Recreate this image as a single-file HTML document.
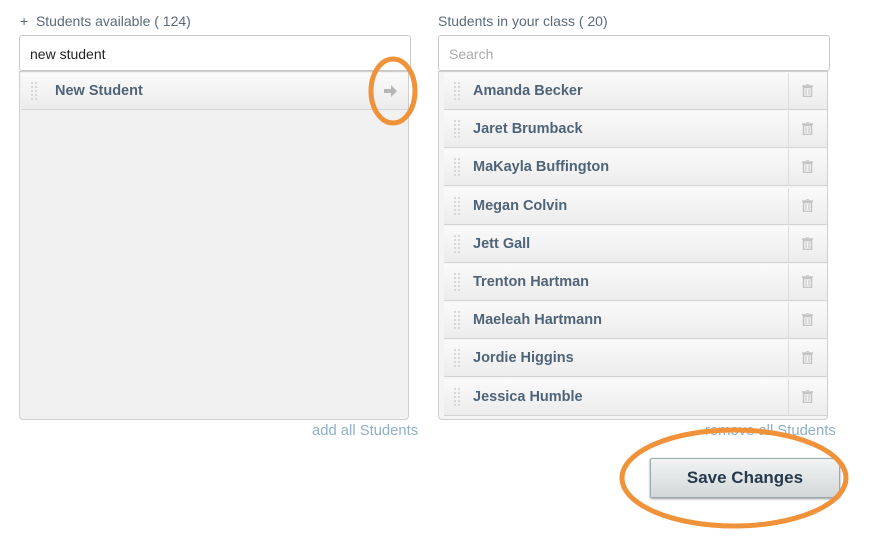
<!DOCTYPE html>
<html><head><style>
body{margin:0;width:877px;height:538px;background:#fff;font-family:"Liberation Sans",sans-serif;position:relative;overflow:hidden}
.a{position:absolute}
.lbl{font-size:14px;color:#5a6a7a}
.inp{border:1px solid #c8c8c8;border-radius:3px;background:#fff;height:36px;box-sizing:border-box;font-size:14px;padding:10px}
.box{border:1px solid #cfcfcf;border-radius:0 0 4px 4px;background:#f1f1f1;box-sizing:border-box}
.row{position:absolute;height:37px;box-sizing:border-box;border-bottom:1px solid #d4d4d4;background:linear-gradient(#fafafa,#ececec);font-weight:bold;font-size:14.5px;color:#4f6478}
.row span{position:absolute;left:29px;top:10px}
.grip{position:absolute;left:9px;top:8px;width:9px;height:20px;background-image:radial-gradient(#d6d6d6 1px,transparent 1.3px);background-size:4px 4px}
.tr{position:absolute;right:0;top:0;width:38px;height:36px;border-left:1px solid #dcdcdc}
.link{font-size:14.8px;color:#8fb0c8}
</style></head><body>
<div class="a lbl" style="left:20px;top:13px">+&nbsp; Students available ( 124)</div>
<div class="a lbl" style="left:438px;top:13px">Students in your class ( 20)</div>
<div class="a inp" style="left:19px;top:35px;width:392px;color:#222">new student</div>
<div class="a inp" style="left:438px;top:35px;width:392px;color:#aaa">Search</div>
<div class="a box" style="left:19px;top:71px;width:390px;height:349px">
<div class="row" style="left:1px;top:1px;width:387px"><div class="grip"></div><span style="left:34px">New Student</span>
<svg style="position:absolute;left:363px;top:12px" width="14" height="12"><path d="M0 4h7V0l6 6-6 6V8H0z" fill="#b5b5b5"/></svg></div>
</div>
<div class="a box" style="left:438px;top:71px;width:390px;height:349px;background:#f4f4f4">
<div id="rl"></div>
</div>
<div class="a link" style="left:312px;top:423px">add all Students</div>
<div class="a link" style="left:705px;top:423px">remove all Students</div>
<div class="a" style="left:650px;top:458px;width:190px;height:40px;box-sizing:border-box;border:1px solid #9aa;border-radius:2px;background:linear-gradient(#f2f4f4,#d3d7d8);box-shadow:0 1px 2px #999;text-align:center;line-height:38px;font-weight:bold;font-size:17px;color:#263a4e">Save Changes</div>
<svg class="a" style="left:0;top:0" width="877" height="538">
<ellipse cx="393" cy="91" rx="22" ry="32" fill="none" stroke="#f0923a" stroke-width="5"/>
<ellipse cx="734" cy="478" rx="112" ry="48" fill="none" stroke="#f0923a" stroke-width="5"/>
</svg>
<script>
var n=["Amanda Becker","Jaret Brumback","MaKayla Buffington","Megan Colvin","Jett Gall","Trenton Hartman","Maeleah Hartmann","Jordie Higgins","Jessica Humble"],h="";
n.forEach(function(s,i){h+='<div class="row" style="left:5px;top:'+(1+i*38.2)+'px;width:383px"><div class="grip"></div><span>'+s+'</span><div class="tr"><svg style="position:absolute;left:13px;top:11px" width="11" height="13"><path d="M0 2h11M4 0h3M1.5 3.5h8v9h-8z" stroke="#c4c4c4" stroke-width="1.5" fill="none"/><path d="M4 5v6M7 5v6" stroke="#c4c4c4"/></svg></div></div>'});
document.getElementById("rl").innerHTML=h;
</script>
</body></html>
